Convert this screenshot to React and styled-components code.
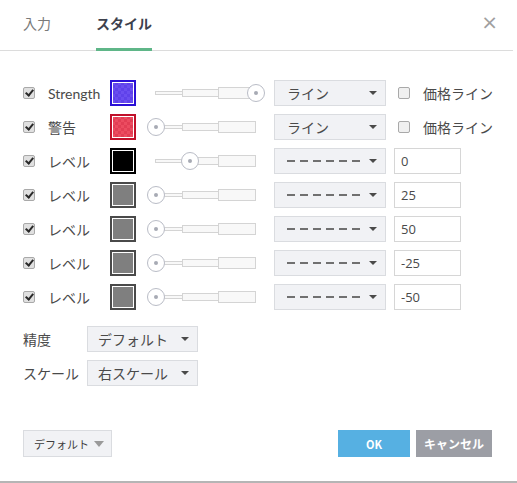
import React from "react";
import styled, { createGlobalStyle } from "styled-components";

const GlobalStyle = createGlobalStyle`
  html, body {
    margin: 0;
    padding: 0;
    background: #fff;
  }
  body {
    font-family: "Lato", "Noto Sans CJK JP", sans-serif;
    color: #4a4a4a;
  }
`;

const rows = [
  { label: "Strength", swatch: "strength", value: 1, style: "line", extra: "price" },
  { label: "警告", swatch: "warning", value: 0, style: "line", extra: "price" },
  { label: "レベル", swatch: "black", value: 0.34, style: "dash", extra: "0" },
  { label: "レベル", swatch: "gray", value: 0, style: "dash", extra: "25" },
  { label: "レベル", swatch: "gray", value: 0, style: "dash", extra: "50" },
  { label: "レベル", swatch: "gray", value: 0, style: "dash", extra: "-25" },
  { label: "レベル", swatch: "gray", value: 0, style: "dash", extra: "-50" },
];

const swatches = {
  strength: { border: "#2a0fd6", fill: "#6b4ef0", dark: "#5f42ea", checker: true },
  warning: { border: "#c0102a", fill: "#ec4c60", dark: "#e23e54", checker: true },
  black: { border: "#000", fill: "#000" },
  gray: { border: "#4a4a4a", fill: "#7f7f7f" },
};

const App = () => {
  const [tab, setTab] = React.useState("style");

  return (
    <>
      <GlobalStyle />
      <Dialog>
        <Header>
          <Tab $active={tab === "input"} onClick={() => setTab("input")}>
            入力
          </Tab>
          <Tab $active={tab === "style"} onClick={() => setTab("style")}>
            スタイル
          </Tab>
          <Close>×</Close>
        </Header>

        <Body>
          {rows.map((r, i) => (
            <Row key={i}>
              <Check $checked />
              <Label>{r.label}</Label>
              <Swatch $c={swatches[r.swatch]} />
              <Slider>
                <Track>
                  <Seg $w={28} $h={4} />
                  <Seg $w={37} $h={8} />
                  <Seg $w={38} $h={12} />
                </Track>
                {/* 値の位置にハンドル */}
                <Handle style={{ left: `${r.value * 100}px` }} />
              </Slider>
              <Select $w={112}>
                {r.style === "line" ? <SelectText>ライン</SelectText> : <Dashes />}
                <Caret />
              </Select>
              {r.extra === "price" ? (
                <PriceLine>
                  <Check />
                  <span>価格ライン</span>
                </PriceLine>
              ) : (
                <NumInput defaultValue={r.extra} />
              )}
            </Row>
          ))}
        </Body>

        <Options>
          <OptRow>
            <OptLabel>精度</OptLabel>
            <Select $w={111} $pad={10}>
              <SelectText>デフォルト</SelectText>
              <Caret />
            </Select>
          </OptRow>
          <OptRow>
            <OptLabel>スケール</OptLabel>
            <Select $w={111} $pad={10}>
              <SelectText>右スケール</SelectText>
              <Caret />
            </Select>
          </OptRow>
        </Options>

        <Footer>
          <DefaultBtn>
            デフォルト
            <Caret $light />
          </DefaultBtn>
          <Spacer />
          <Button $kind="ok">OK</Button>
          <Button $kind="cancel">キャンセル</Button>
        </Footer>
      </Dialog>
    </>
  );
};

const Dialog = styled.div`
  width: 517px;
  height: 483px;
  box-sizing: border-box;
  border-bottom: 2px solid #b5b5b5;
  display: flex;
  flex-direction: column;
`;

const Header = styled.div`
  height: 51px;
  box-sizing: border-box;
  margin-right: 4px;
  border-bottom: 1px solid #dcdcdc;
  display: flex;
  align-items: stretch;
  padding-left: 23px;
  gap: 45px;
`;

const Tab = styled.div`
  display: flex;
  align-items: center;
  padding: 0 0 2px;
  margin-bottom: -1px;
  font-family: "Noto Sans CJK JP", sans-serif;
  font-size: 14px;
  color: ${(p) => (p.$active ? "#3d414d" : "#7a7a7a")};
  font-weight: ${(p) => (p.$active ? 700 : 400)};
  border-bottom: 3px solid ${(p) => (p.$active ? "#5fb688" : "transparent")};
  cursor: pointer;
`;

const Close = styled.div`
  margin-left: auto;
  margin-right: 15px;
  display: flex;
  align-items: center;
  padding-bottom: 6px;
  font-size: 20px;
  color: #a0a0a0;
  font-family: "DejaVu Sans", sans-serif;
`;

const Body = styled.div`
  padding: 29px 0 0 23px;
  display: flex;
  flex-direction: column;
  gap: 8px;
`;

const Row = styled.div`
  display: flex;
  align-items: center;
  height: 26px;
`;

const Check = styled.span`
  width: 12px;
  height: 12px;
  box-sizing: border-box;
  flex: none;
  border: 1px solid #a9a9a9;
  border-radius: 2px;
  background: ${(p) => (p.$checked ? "#e0e0e0" : "#f0f0f0")};
  position: relative;
  &::after {
    content: "";
    display: ${(p) => (p.$checked ? "block" : "none")};
    position: absolute;
    left: 3px;
    top: 0px;
    width: 3px;
    height: 6px;
    border: solid #2a2a2a;
    border-width: 0 2px 2px 0;
    transform: rotate(40deg);
  }
`;

const Label = styled.span`
  width: 62px;
  margin-left: 13px;
  font-size: 14px;
  color: #4a4a4a;
  white-space: nowrap;
`;

const Swatch = styled.span`
  width: 26px;
  height: 26px;
  box-sizing: border-box;
  flex: none;
  border: 1px solid ${(p) => p.$c.border};
  padding: 1px;
  background-clip: content-box;
  background-color: ${(p) => p.$c.fill};
  background-image: ${(p) =>
    p.$c.checker
      ? `linear-gradient(45deg, ${p.$c.dark} 25%, transparent 25%, transparent 75%, ${p.$c.dark} 75%),
         linear-gradient(45deg, ${p.$c.dark} 25%, transparent 25%, transparent 75%, ${p.$c.dark} 75%)`
      : "none"};
  background-size: 6px 6px;
  background-position: 1px 1px, 4px 4px;
  outline: 1px solid #fff;
  outline-offset: -3px;
  box-shadow: inset 0 0 0 1px ${(p) => p.$c.border};
`;

const Slider = styled.div`
  position: relative;
  width: 118px;
  height: 26px;
  margin-left: 11px;
  flex: none;
`;

const Track = styled.div`
  position: absolute;
  left: 9px;
  top: 0;
  bottom: 0;
  display: flex;
  align-items: center;
`;

const Seg = styled.span`
  width: ${(p) => p.$w}px;
  height: ${(p) => p.$h}px;
  box-sizing: border-box;
  border: 1px solid #d4d4d4;
  background: #f8f8f8;
  margin-left: -1px;
`;

const Handle = styled.span`
  position: absolute;
  top: 4px;
  width: 18px;
  height: 18px;
  box-sizing: border-box;
  border: 1px solid #b9bcc6;
  border-radius: 50%;
  background: #fff;
  &::after {
    content: "";
    position: absolute;
    left: 6px;
    top: 6px;
    width: 4px;
    height: 4px;
    border-radius: 50%;
    background: #a7aab4;
  }
`;

const Select = styled.div`
  width: ${(p) => p.$w}px;
  height: 26px;
  box-sizing: border-box;
  margin-left: 9px;
  flex: none;
  border: 1px solid #dadce0;
  background: #f1f2f5;
  display: flex;
  align-items: center;
  padding: 0 8px 0 ${(p) => p.$pad ?? 12}px;
`;

const SelectText = styled.span`
  flex: 1;
  font-family: "Noto Sans CJK JP", sans-serif;
  font-size: 14px;
  color: #4a4a4a;
  white-space: nowrap;
`;

const Caret = styled.i`
  width: 0;
  height: 0;
  flex: none;
  margin-left: auto;
  border-left: 4px solid transparent;
  border-right: 4px solid transparent;
  border-top: 4px solid ${(p) => (p.$light ? "#9a9a9a" : "#4a4a4a")};
`;

const Dashes = styled.span`
  height: 2px;
  width: 74px;
  flex: none;
  background: repeating-linear-gradient(
    90deg,
    #707070 0 8px,
    transparent 8px 13px
  );
`;

const PriceLine = styled.label`
  display: flex;
  align-items: center;
  gap: 13px;
  margin-left: 12px;
  font-family: "Noto Sans CJK JP", sans-serif;
  font-size: 14px;
  color: #4a4a4a;
  white-space: nowrap;
`;

const NumInput = styled.input`
  width: 67px;
  height: 26px;
  box-sizing: border-box;
  margin-left: 8px;
  border: 1px solid #d6d6d6;
  padding: 0 6px;
  font-family: "Open Sans", sans-serif;
  font-size: 13px;
  color: #4a4a4a;
  outline: none;
`;

const Options = styled.div`
  padding: 16px 0 0 23px;
  display: flex;
  flex-direction: column;
  gap: 8px;
`;

const OptRow = styled.div`
  display: flex;
  align-items: center;
  ${Select} {
    margin-left: 0;
  }
`;

const OptLabel = styled.span`
  width: 64px;
  font-family: "Noto Sans CJK JP", sans-serif;
  font-size: 14px;
  color: #4a4a4a;
  white-space: nowrap;
`;

const Footer = styled.div`
  margin-top: auto;
  padding: 0 25px 24px 23px;
  display: flex;
  align-items: center;
  gap: 6px;
`;

const Spacer = styled.div`
  flex: 1;
`;

const DefaultBtn = styled.div`
  width: 89px;
  height: 27px;
  box-sizing: border-box;
  border: 1px solid #dadce0;
  background: #f1f2f5;
  display: flex;
  align-items: center;
  padding: 0 7px 0 10px;
  font-family: "Noto Sans CJK JP", sans-serif;
  font-size: 11px;
  color: #3d3d3d;
  white-space: nowrap;
  ${Caret} {
    border-left-width: 5px;
    border-right-width: 5px;
    border-top-width: 6px;
  }
`;

const Button = styled.button`
  height: 27px;
  width: ${(p) => (p.$kind === "ok" ? "72px" : "76px")};
  border: none;
  background: ${(p) => (p.$kind === "ok" ? "#56b0e2" : "#9c9ea5")};
  color: #fff;
  font-family: "Noto Sans CJK JP", sans-serif;
  font-weight: 700;
  font-size: ${(p) => (p.$kind === "ok" ? "11px" : "12px")};
  cursor: pointer;
  padding: 0;
`;

export default App;
